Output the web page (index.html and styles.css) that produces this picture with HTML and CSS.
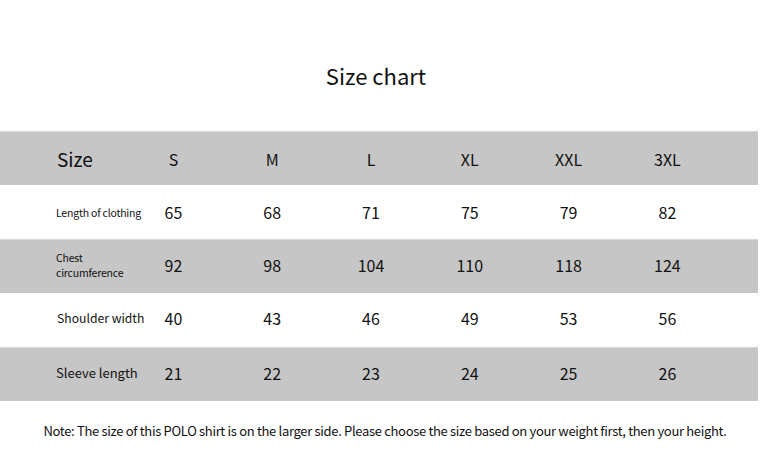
FILE: index.html
```html
<!DOCTYPE html>
<html>
<head>
<meta charset="utf-8">
<link rel="stylesheet" href="styles.css">
</head>
<body>
<div class="page">
  <h1 class="title">Size chart</h1>
  <div class="table">
    <div class="row gray head">
      <div class="label big">Size</div>
      <div class="cell">S</div><div class="cell">M</div><div class="cell">L</div>
      <div class="cell">XL</div><div class="cell">XXL</div><div class="cell">3XL</div>
    </div>
    <div class="row first">
      <div class="label small">Length of clothing</div>
      <div class="cell">65</div><div class="cell">68</div><div class="cell">71</div>
      <div class="cell">75</div><div class="cell">79</div><div class="cell">82</div>
    </div>
    <div class="row gray">
      <div class="label small">Chest<br>circumference</div>
      <div class="cell">92</div><div class="cell">98</div><div class="cell">104</div>
      <div class="cell">110</div><div class="cell">118</div><div class="cell">124</div>
    </div>
    <div class="row">
      <div class="label mid narrow">Shoulder width</div>
      <div class="cell">40</div><div class="cell">43</div><div class="cell">46</div>
      <div class="cell">49</div><div class="cell">53</div><div class="cell">56</div>
    </div>
    <div class="row gray">
      <div class="label mid">Sleeve length</div>
      <div class="cell">21</div><div class="cell">22</div><div class="cell">23</div>
      <div class="cell">24</div><div class="cell">25</div><div class="cell">26</div>
    </div>
  </div>
  <p class="note">Note: The size of this POLO shirt is on the larger side. Please choose the size based on your weight first, then your height.</p>
</div>
</body>
</html>
```

FILE: styles.css
```css
html, body {
  margin: 0;
  padding: 0;
  background: #ffffff;
}
body {
  font-family: "Noto Sans CJK SC", "Noto Sans", sans-serif;
  color: #1a1a1a;
  width: 764px;
  height: 466px;
  overflow: hidden;
}
.page {
  display: flex;
  flex-direction: column;
}
.title {
  margin: 0;
  width: 752px;
  height: 131px;
  display: flex;
  align-items: center;
  justify-content: center;
  padding-top: 19px;
  box-sizing: border-box;
  font-size: 22px;
  font-weight: 400;
  color: #111;
}
.table {
  width: 758px;
  display: flex;
  flex-direction: column;
}
.row {
  display: grid;
  grid-template-columns: 124px repeat(6, 98.8px);
  height: 54px;
  align-items: center;
  padding-bottom: 4px;
  box-sizing: border-box;
}
.row.first {
  padding-bottom: 0;
}
.row.gray {
  background: #c6c6c6;
  border-top: 1px solid #d8d8d8;
}
.head {
  height: 54px;
  padding-bottom: 0;
}
.label {
  padding-left: 56px;
  white-space: nowrap;
  color: #111;
}
.label.big {
  font-size: 19px;
  padding-left: 57px;
}
.label.small {
  font-size: 10.5px;
  line-height: 15px;
  letter-spacing: -0.2px;
}
.label.mid {
  font-size: 13px;
}
.label.narrow {
  font-size: 12.2px;
  padding-left: 57px;
}
.cell {
  text-align: center;
  font-size: 16px;
  color: #111;
}
.note {
  margin: 0;
  height: 58px;
  padding-left: 6px;
  display: flex;
  align-items: center;
  justify-content: center;
  font-size: 13px;
  letter-spacing: -0.32px;
  color: #111;
}
```
